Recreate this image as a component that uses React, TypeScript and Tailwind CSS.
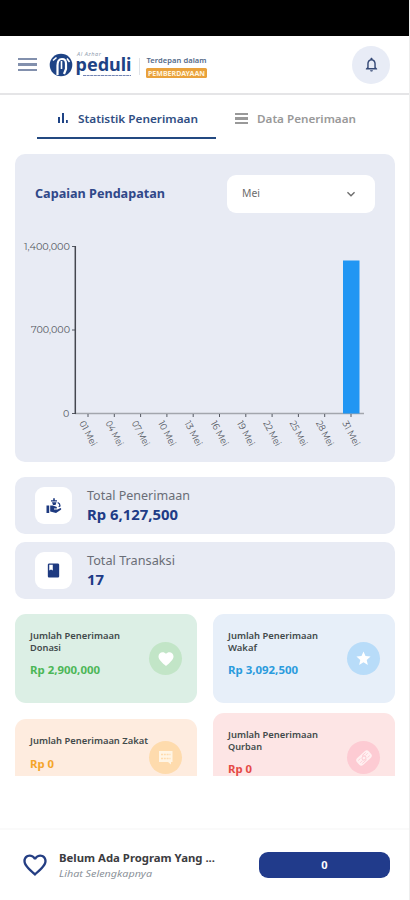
import React from "react";
import { MdFavorite, MdStar, MdBook, MdNotificationsNone, MdFavoriteBorder, MdKeyboardArrowDown } from "react-icons/md";

const days = ["01", "04", "07", "10", "13", "16", "19", "22", "25", "28", "31"];

function Logo() {
  return (
    <svg className="block shrink-0" width="162" height="30" viewBox="0 0 162 30" fontFamily="'Noto Sans', sans-serif">
      <circle cx="13" cy="15" r="11.3" fill="#1e4385" />
      <path d="M9.500 25v-9.500c0-4 1.500-6.500 4.500-6.500 2.500 0 4 2 4 4.500V19l-2 5" fill="none" stroke="#fff" strokeWidth="2.200" />
      <path d="M13.500 19v-8M5 10.500l3.500-3M19 8.500l2.500 3.500" fill="none" stroke="#fff" strokeWidth="1.600" />
      <text x="29" y="6" fontSize="5.500" fontStyle="italic" fill="#8f9cae" textLength="24">Al Azhar</text>
      <text x="27.500" y="21" fontSize="18.500" fontWeight="700" fill="#1e4385" textLength="56" lengthAdjust="spacingAndGlyphs">peduli</text>
      <path d="M35 25.500h48" stroke="#7183b3" strokeWidth="1.200" strokeDasharray="3 .6" />
      <path d="M91.500 8v17" stroke="#dfe2e7" />
      <text x="98.500" y="12.500" fontSize="7.500" fontWeight="600" fill="#526989" textLength="60">Terdepan dalam</text>
      <rect x="98" y="18" width="61" height="10" rx="1.500" fill="#e9a13b" />
      <text x="100" y="25.500" fontSize="6.500" fontWeight="700" fill="#fff4df" textLength="57" lengthAdjust="spacingAndGlyphs">PEMBERDAYAAN</text>
    </svg>
  );
}

function Chart() {
  return (
    <svg className="block" width="380" height="224" viewBox="15 234 380 224" fontFamily="Montserrat, 'Noto Sans', sans-serif" fontSize="9.500" fill="#555962">
      <text x="24" y="250" textLength="46" lengthAdjust="spacingAndGlyphs">1,400,000</text>
      <text x="31" y="333" textLength="39" lengthAdjust="spacingAndGlyphs">700,000</text>
      <text x="63" y="417">0</text>
      <path d="M72 246.500h3.500M72 330h3.500M72 413.500h3.500" stroke="#555962" />
      <path d="M75 413.500h289" stroke="#a3a6ad" strokeWidth="1.500" />
      <path d="M75.300 246v168" stroke="#44474f" strokeWidth="1.500" />
      <rect x="343" y="260.500" width="16.500" height="153" fill="#2196f3" />
      {days.map((d, i) => (
        <g key={d}>
          <path d={`M${88 + i * 26.300} 414v3`} stroke="#555962" />
          <text transform={`translate(${79 + i * 26.300} 423) rotate(62)`} textLength="27" lengthAdjust="spacingAndGlyphs">{d} Mei</text>
        </g>
      ))}
    </svg>
  );
}

function HandMoney() {
  return (
    <svg width="16" height="16" viewBox="0 0 16 16" fill="#1e3a80">
      <path d="M.5 7.500h2.700V15H.5zM4.200 7.500h2.600l4 1.600v1.400H8v1h3.500l3-1.500c1 .4 1 1.300 0 2l-4.500 3-5.800-1.500z" />
      <path d="M5 2.200h6v1.200H5zM7.200.3h1.600v2.500H7.200zM6 4.200h4.500L9.500 7H7zM12 4l2 1.500.7 2.700-1.700 1-.6-.8.9-.8-.5-1.500-1.400-1z" />
    </svg>
  );
}

function Summary({ label, value, width, valueWidth, icon }: { label: string; value: string; width: string; valueWidth: string; icon: React.ReactNode }) {
  return (
    <section className="flex h-[57px] items-center rounded-[10px] bg-[#e8ebf4] pl-5">
      <div className="flex size-[37px] items-center justify-center rounded-[9px] bg-white">{icon}</div>
      <div className="ml-[15px] whitespace-nowrap pt-px">
        <Line text={label} width={width} className="h-[18px] text-[#6a6e77]" size={12} />
        <Line text={value} width={valueWidth} className="h-[20px] font-bold text-[#203b86]" size={14} />
      </div>
    </section>
  );
}

function Line({ text, width, size, className }: { text: string; width: string; size: number; className: string }) {
  return (
    <svg className={`block overflow-visible ${className}`} width={width} fill="currentColor">
      <text y={size + 1} fontSize={size} textLength={width} lengthAdjust="spacingAndGlyphs">{text}</text>
    </svg>
  );
}

function Card({ lines, widths, value, valueWidth, bg, badge, color, icon }: { lines: string[]; widths: string[]; value: string; valueWidth: string; bg: string; badge: string; color: string; icon: React.ReactNode }) {
  return (
    <section className={`flex justify-between rounded-[11px] px-[15px] pt-[15px] ${bg}`}>
      <div>
        {lines.map((line, i) => (
          <Line key={line} text={line} width={widths[i]} size={9} className="h-3 font-semibold text-[#424a4b]" />
        ))}
        <Line text={value} width={valueWidth} size={11} className={`h-5 font-bold ${lines.length > 1 ? "mt-[9px]" : "mt-[10px]"} ${color}`} />
      </div>
      <div className={`-ml-5 flex size-[33px] shrink-0 items-center justify-center rounded-full text-white ${badge}`}>{icon}</div>
    </section>
  );
}

export default function App() {
  return (
    <div className="flex h-[900px] w-[410px] flex-col overflow-hidden border-r border-[#eeeeee] bg-white font-['Noto_Sans',sans-serif]">
      <div className="h-[36px] shrink-0 bg-black" />
      <header className="flex h-[59px] shrink-0 items-center border-b-2 border-[#e5e5e7] pl-[18px] pr-[19px]">
        <div className="mr-[11px] flex w-[19px] flex-col gap-[3px]">
          <i className="h-[2.500px] bg-[#8290ad]" /><i className="h-[2.500px] bg-[#8290ad]" /><i className="h-[2.500px] bg-[#8290ad]" />
        </div>
        <Logo />
        <button className="ml-auto flex size-[38px] items-center justify-center rounded-full bg-[#e8ecf6] text-[#344875]"><MdNotificationsNone size={17} /></button>
      </header>
      <nav className="flex h-[59px] shrink-0 pl-[37px]">
        <div className="flex h-[44px] w-[179px] items-center border-b-2 border-[#234981] pl-5 text-[#304e83]">
          <svg className="mr-[10px] mt-[5px]" width="11" height="11" fill="#1e4385"><path d="M1 4h2v6H1zM5 0h2v10H5zM9 7h1.800v3H9z" /></svg>
          <Line text="Statistik Penerimaan" width="120" size={11.5} className="mt-1 h-4 font-semibold" />
        </div>
        <div className="flex h-[43px] items-center pl-[19px] text-[#999999]">
          <div className="mr-[9px] mt-[4px] flex w-[13px] flex-col gap-[2px]"><i className="h-[2.500px] bg-[#999]" /><i className="h-[2.500px] bg-[#999]" /><i className="h-[2.500px] bg-[#999]" /></div>
          <Line text="Data Penerimaan" width="99" size={11.5} className="mt-[3px] h-4 font-semibold" />
        </div>
      </nav>
      <main className="flex h-[622px] shrink-0 flex-col overflow-hidden pl-[15px] pr-[14px]">
        <section className="h-[308px] shrink-0 rounded-[10px] bg-[#e8ebf4]">
          <div className="flex h-[80px] items-center justify-between px-5">
            <Line text="Capaian Pendapatan" width="130" size={12} className="h-[18px] font-bold text-[#304889]" />
            <div className="flex h-[38px] w-[148px] items-center justify-between rounded-[9px] bg-white pl-[15px] pr-[16px] text-[#6c6c6c]">
              <Line text="Mei" width="18" size={10} className="h-4" />
              <MdKeyboardArrowDown size={16} />
            </div>
          </div>
          <Chart />
        </section>
        <div className="mt-[15px] flex shrink-0 flex-col gap-2">
          <Summary label="Total Penerimaan" value="Rp 6,127,500" width="103" valueWidth="91" icon={<HandMoney />} />
          <Summary label="Total Transaksi" value="17" width="88" valueWidth="17" icon={<MdBook size={17} color="#1e3a80" />} />
        </div>
        <div className="mt-[15px] grid shrink-0 grid-cols-2 gap-x-4">
          <div className="grid grid-rows-[89px_89px] gap-4">
            <Card lines={["Jumlah Penerimaan", "Donasi"]} widths={["90", "31"]} value="Rp 2,900,000" valueWidth="70" bg="bg-[#dcefe5]" badge="mt-[13px] bg-[#c2e5c7]" color="text-[#4cb757]" icon={<MdFavorite size={18} />} />
            <Card lines={["Jumlah Penerimaan Zakat"]} widths={["118"]} value="Rp 0" valueWidth="24" bg="bg-[#feecdf]" badge="mt-[7px] bg-[#fedbad]" color="text-[#f4a52a]" icon={<svg width="17" height="17" viewBox="0 0 17 17"><path fill="#fff5e5" d="M2 2h13.500v11H14v2.500L11 13H2z" /><path d="M4 5.500h9.500M4 9.500h9.500" stroke="#fedbad" strokeWidth="1.300" strokeDasharray="2 .8" /></svg>} />
          </div>
          <div className="grid grid-rows-[89px_100px] gap-[10px]">
            <Card lines={["Jumlah Penerimaan", "Wakaf"]} widths={["90", "29"]} value="Rp 3,092,500" valueWidth="70" bg="bg-[#e7eff9]" badge="mt-[13px] bg-[#b8dcf9]" color="text-[#2a9bdd]" icon={<MdStar size={17} />} />
            <Card lines={["Jumlah Penerimaan", "Qurban"]} widths={["90", "34"]} value="Rp 0" valueWidth="24" bg="bg-[#fde5e5]" badge="mt-[13px] bg-[#fdcbd3]" color="text-[#e54a46]" icon={<svg width="18" height="18" viewBox="0 0 18 18"><g transform="rotate(-42 9 9)"><rect x="1" y="4.500" width="16" height="9" rx="3" fill="#fff0f1" /><circle cx="9" cy="9" r="2" fill="none" stroke="#fdcbd3" /><path d="M3 7h3M3 10h3M12 8h3M12 11h3M4 12h6M9 6h5" stroke="#fdcbd3" strokeWidth=".8" /></g></svg>} />
          </div>
        </div>
      </main>
      <footer className="mt-[52px] flex h-[72px] shrink-0 items-center border-t-2 border-[#fafafa] pl-[21px] pr-[19px]">
        <MdFavoriteBorder size={28} color="#243e83" />
        <div className="ml-[10px]">
          <Line text="Belum Ada Program Yang ..." width="156" size={11} className="h-[16px] font-bold text-[#3c3c3f]" />
          <Line text="Lihat Selengkapnya" width="93" size={9.5} className="h-[15px] italic text-[#8b9299]" />
        </div>
        <button className="ml-auto h-[26px] w-[131px] rounded-[9px] bg-[#213b8b] text-[11px] font-bold text-white">0</button>
      </footer>
    </div>
  );
}
